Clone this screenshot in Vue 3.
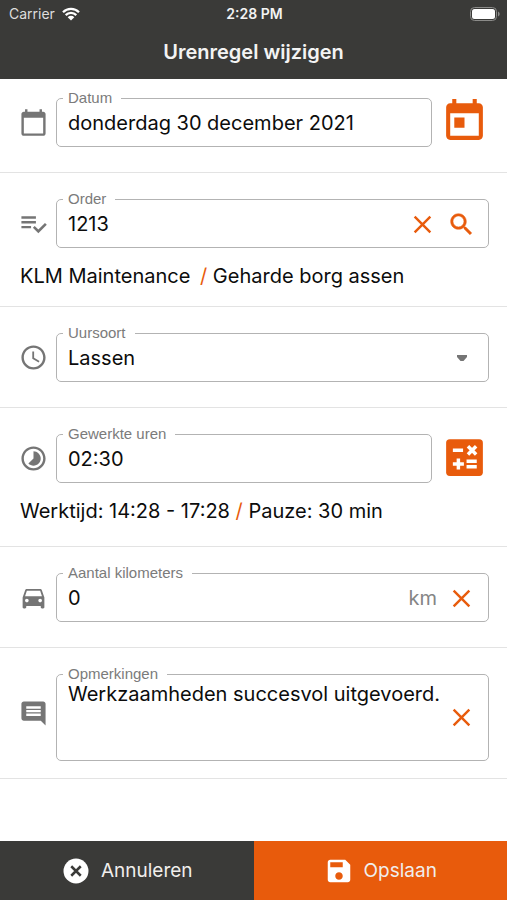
<script setup>
import { ref } from 'vue'

const date = ref('donderdag 30 december 2021')
const order = ref('1213')
const hourType = ref('Lassen')
const hours = ref('02:30')
const kilometers = ref('0')
const remarks = ref('Werkzaamheden succesvol uitgevoerd.')
</script>

<template>
  <div class="screen">
    <header class="header">
      <div class="status">
        <div class="carrier">
          <span>Carrier</span>
          <svg class="wifi" viewBox="0 0 18 14" aria-hidden="true">
            <path d="M1 5.2a11.4 11.4 0 0 1 16 0M3.7 8.1a7.5 7.5 0 0 1 10.6 0" fill="none" stroke="currentColor" stroke-width="2.3" />
            <path d="M9 13.6 5.7 10.2a4.7 4.7 0 0 1 6.6 0z" fill="currentColor" />
          </svg>
        </div>
        <span class="time">2:28 PM</span>
        <svg class="battery" viewBox="0 0 30 14" aria-hidden="true">
          <rect x="0.5" y="0.5" width="26" height="13" rx="4" fill="none" stroke="#8b8b89" />
          <rect x="2" y="2" width="23" height="10" rx="2.5" fill="#fff" />
          <path d="M28 4.5v5c1-.4 1.700-1.400 1.700-2.500S29 4.900 28 4.500z" fill="#8b8b89" />
        </svg>
      </div>
      <h1>Urenregel wijzigen</h1>
    </header>

    <main>
      <section class="row first">
        <div class="line">
          <svg class="lead" viewBox="0 0 24 24" aria-hidden="true"><path d="M20 3h-1V1h-2v2H7V1H5v2H4c-1.100 0-2 .9-2 2v16c0 1.100.9 2 2 2h16c1.100 0 2-.9 2-2V5c0-1.100-.9-2-2-2zm0 18H4V8h16v13z" /></svg>
          <fieldset class="field">
            <legend><label for="date">Datum</label></legend>
            <div class="control"><input id="date" v-model="date" type="text" /></div>
          </fieldset>
          <button class="side" type="button" aria-label="Datum kiezen">
            <svg viewBox="0 0 24 24"><path d="M19 3h-1V1h-2v2H8V1H6v2H5c-1.110 0-1.990.9-1.990 2L3 19c0 1.100.89 2 2 2h14c1.100 0 2-.9 2-2V5c0-1.100-.9-2-2-2zm0 16H5V8h14v11zM7 10h5v5H7z" /></svg>
          </button>
        </div>
      </section>

      <section class="row">
        <div class="line">
          <svg class="lead" viewBox="0 0 24 24" aria-hidden="true"><path d="M14 10H2v2h12v-2zm0-4H2v2h12V6zM2 16h8v-2H2v2zm19.500-4.500L23 13l-6.990 7-4.510-4.500L13 14l3.010 3 5.490-5.500z" /></svg>
          <fieldset class="field">
            <legend><label for="order">Order</label></legend>
            <div class="control">
              <input id="order" v-model="order" type="text" />
              <button class="action" type="button" aria-label="Order wissen" @click="order = ''">
                <svg viewBox="0 0 24 24"><path class="cross" d="M5.500 5.500l13 13M18.500 5.500l-13 13" /></svg>
              </button>
              <button class="action" type="button" aria-label="Order zoeken">
                <svg class="search" viewBox="0 0 24 24"><path d="M15.500 14h-.79l-.28-.27C15.410 12.590 16 11.110 16 9.500 16 5.910 13.090 3 9.500 3S3 5.910 3 9.500 5.910 16 9.500 16c1.610 0 3.090-.59 4.230-1.570l.27.28v.79l5 4.990L20.490 19l-4.990-5zm-6 0C7.010 14 5 11.990 5 9.500S7.010 5 9.500 5 14 7.010 14 9.500 11.990 14 9.500 14z" /></svg>
              </button>
            </div>
          </fieldset>
        </div>
        <p class="info"><span class="customer">KLM Maintenance</span> <span class="slash">/</span> Geharde borg assen</p>
      </section>

      <section class="row">
        <div class="line">
          <svg class="lead" viewBox="0 0 24 24" aria-hidden="true"><path d="M11.990 2C6.470 2 2 6.480 2 12s4.470 10 9.990 10C17.520 22 22 17.520 22 12S17.520 2 11.990 2zM12 20c-4.420 0-8-3.580-8-8s3.580-8 8-8 8 3.580 8 8-3.580 8-8 8zM12.500 7H11v6l5.250 3.150.75-1.230-4.500-2.670z" /></svg>
          <fieldset class="field">
            <legend><label for="type">Uursoort</label></legend>
            <div class="control picker">
              <select id="type" v-model="hourType"><option>Lassen</option></select>
              <svg class="caret" viewBox="0 0 12 8" aria-hidden="true"><path d="M1 1h10v2L7.500 7h-3L1 3z" /></svg>
            </div>
          </fieldset>
        </div>
      </section>

      <section class="row roomy">
        <div class="line">
          <svg class="lead" viewBox="0 0 24 24" aria-hidden="true"><path d="M16.240 7.760C15.070 6.590 13.540 6 12 6v6l-4.240 4.240c2.340 2.340 6.140 2.340 8.490 0 2.340-2.340 2.340-6.140-.01-8.480zM12 2C6.480 2 2 6.480 2 12s4.480 10 10 10 10-4.480 10-10S17.520 2 12 2zm0 18c-4.420 0-8-3.580-8-8s3.580-8 8-8 8 3.580 8 8-3.580 8-8 8z" /></svg>
          <fieldset class="field">
            <legend><label for="hours">Gewerkte uren</label></legend>
            <div class="control"><input id="hours" v-model="hours" type="text" /></div>
          </fieldset>
          <button class="side" type="button" aria-label="Uren berekenen">
            <svg viewBox="0 0 24 24">
              <rect x="3" y="3" width="18" height="18" rx="1.800" />
              <path d="M6.300 8.500h5M13.700 6.500l4 4M17.700 6.500l-4 4M6.300 15.200h5.400M9 12.500v5.400M13 13.800h5M13 16.500h5" fill="none" stroke="#fff" stroke-width="1.700" />
            </svg>
          </button>
        </div>
        <p class="info">Werktijd: 14:28 - 17:28 <span class="slash">/</span> Pauze: 30 min</p>
      </section>

      <section class="row">
        <div class="line">
          <svg class="lead" viewBox="0 0 24 24" aria-hidden="true"><path d="M18.920 6.010C18.720 5.420 18.160 5 17.500 5h-11c-.66 0-1.210.42-1.420 1.010L3 12v8c0 .55.45 1 1 1h1c.55 0 1-.45 1-1v-1h12v1c0 .55.45 1 1 1h1c.55 0 1-.45 1-1v-8l-2.080-5.990zM6.500 16c-.83 0-1.500-.67-1.500-1.500S5.670 13 6.500 13s1.500.67 1.500 1.500S7.330 16 6.500 16zm11 0c-.83 0-1.500-.67-1.500-1.500s.67-1.500 1.500-1.500 1.500.67 1.500 1.500-.67 1.500-1.500 1.500zM5 11l1.500-4.500h11L19 11H5z" /></svg>
          <fieldset class="field">
            <legend><label for="km">Aantal kilometers</label></legend>
            <div class="control">
              <input id="km" v-model="kilometers" type="text" inputmode="numeric" />
              <span class="unit">km</span>
              <button class="action" type="button" aria-label="Kilometers wissen" @click="kilometers = ''">
                <svg viewBox="0 0 24 24"><path class="cross" d="M5.500 5.500l13 13M18.500 5.500l-13 13" /></svg>
              </button>
            </div>
          </fieldset>
        </div>
      </section>

      <section class="row remarks">
        <div class="line">
          <svg class="lead" viewBox="0 0 24 24" aria-hidden="true"><path d="M21.990 4c0-1.100-.89-2-1.990-2H4c-1.100 0-2 .9-2 2v12c0 1.100.9 2 2 2h14l4 4-.01-18zM18 14H6v-2h12v2zm0-3H6V9h12v2zm0-3H6V6h12v2z" /></svg>
          <fieldset class="field">
            <legend><label for="remarks">Opmerkingen</label></legend>
            <div class="control tall">
              <textarea id="remarks" v-model="remarks"></textarea>
              <button class="action" type="button" aria-label="Opmerkingen wissen" @click="remarks = ''">
                <svg viewBox="0 0 24 24"><path class="cross" d="M5.500 5.500l13 13M18.500 5.500l-13 13" /></svg>
              </button>
            </div>
          </fieldset>
        </div>
      </section>
    </main>

    <footer class="footer">
      <button class="cancel" type="button">
        <svg viewBox="0 0 24 24" aria-hidden="true"><circle cx="12" cy="12" r="10" fill="currentColor" /><path d="M8.200 8.200l7.600 7.600M15.800 8.200l-7.600 7.600" stroke="#3a3a38" stroke-width="2" /></svg>
        <span>Annuleren</span>
      </button>
      <button class="save" type="button">
        <svg viewBox="0 0 24 24" aria-hidden="true"><path fill="currentColor" d="M17 3H5c-1.110 0-2 .9-2 2v14c0 1.100.89 2 2 2h14c1.100 0 2-.9 2-2V7l-4-4zm-5 16c-1.660 0-3-1.340-3-3s1.340-3 3-3 3 1.340 3 3-1.340 3-3 3zm3-10H5V5h10v4z" /></svg>
        <span>Opslaan</span>
      </button>
    </footer>
  </div>
</template>

<style>
body {
  margin: 0;
  background: #fff;
}
</style>

<style scoped>
.screen {
  display: flex;
  flex-direction: column;
  min-height: 100vh;
  font-family: Inter, "Liberation Sans", sans-serif;
  font-size: 20px;
  color: #0c0c0c;
}
svg {
  display: block;
  flex: none;
}
button,
input,
select,
textarea {
  font: inherit;
  color: inherit;
  border: 0;
  margin: 0;
  padding: 0;
  background: none;
  outline: none;
}
button {
  cursor: pointer;
}
.header {
  height: 79px;
  background: #3a3a38;
  color: #f3f3f3;
}
.status {
  display: grid;
  grid-template-columns: 1fr auto 1fr;
  align-items: center;
  height: 27px;
  padding: 0 7px 0 9px;
  font-size: 14px;
}
.carrier {
  display: flex;
  align-items: center;
  gap: 7px;
  color: #dededd;
}
.wifi {
  width: 18px;
  height: 14px;
  color: #fff;
}
.time {
  font-weight: 600;
}
.battery {
  width: 30px;
  height: 14px;
  justify-self: end;
}
h1 {
  margin: 0;
  font-size: 20px;
  line-height: 50px;
  font-weight: 600;
  text-align: center;
}
main {
  flex: 1;
}
.row {
  padding: 18px 18px 25px 19px;
  border-bottom: 1px solid #e3e3e3;
}
.row.first {
  padding-top: 11px;
}
.row:has(.info) {
  padding-bottom: 17px;
}
.row.roomy {
  padding-bottom: 22px;
}
.row.remarks {
  padding-bottom: 17px;
}
.line {
  display: flex;
  align-items: center;
}
.lead {
  width: 29px;
  height: 29px;
  margin-right: 8px;
  padding-top: 8px;
  fill: #757575;
}
.remarks .lead {
  padding-top: 0;
}
.field {
  flex: 1;
  min-width: 0;
  margin: 0;
  padding: 0 12px 0 6px;
  border: 1px solid #b3b3b3;
  border-radius: 5px;
}
legend {
  padding: 0 9px 0 5px;
  font-family: "Liberation Sans", sans-serif;
  font-size: 15px;
  line-height: 16px;
  color: #7b7b7b;
}
.control {
  display: flex;
  align-items: center;
  gap: 10px;
  height: 34px;
  padding: 0 0 6px 5px;
}
.control input,
.control select,
.control textarea {
  flex: 1;
  min-width: 0;
  width: 100%;
  height: 30px;
}
.control select {
  appearance: none;
}
.control.picker {
  display: grid;
  grid-template-columns: 1fr 29px;
  gap: 0;
}
.picker select {
  grid-area: 1 / 1 / 2 / 3;
}
.caret {
  grid-area: 1 / 2;
  justify-self: center;
  width: 12px;
  height: 8px;
  fill: #757575;
  pointer-events: none;
}
.control.tall {
  gap: 0;
  height: 70px;
  padding-bottom: 8px;
}
.control textarea {
  height: 70px;
  line-height: 24px;
  resize: none;
  overflow: hidden;
}
.unit {
  color: #858585;
}
.action svg {
  width: 29px;
  height: 29px;
  fill: #e85b0c;
}
.action .search {
  stroke: #e85b0c;
  stroke-width: 0.4;
}
.action .cross {
  fill: none;
  stroke: #e85b0c;
  stroke-width: 2;
}
.side {
  margin: 6px 0 0 8px;
}
.side svg {
  width: 49px;
  height: 49px;
  fill: #e85b0c;
}
.info {
  margin: 15px 0 0 1px;
  line-height: 26px;
}
.slash {
  color: #e85b0c;
}
.customer {
  margin-right: 4px;
}
.footer {
  display: flex;
  height: 59px;
}
.footer button {
  flex: 1;
  display: flex;
  align-items: center;
  justify-content: center;
  gap: 10px;
  font-size: 19px;
  color: #fff;
}
.footer svg {
  width: 30px;
  height: 30px;
}
.footer span {
  color: #f0eeec;
}
.cancel {
  background: #3a3a38;
}
.save {
  background: #e85b0c;
}
</style>
